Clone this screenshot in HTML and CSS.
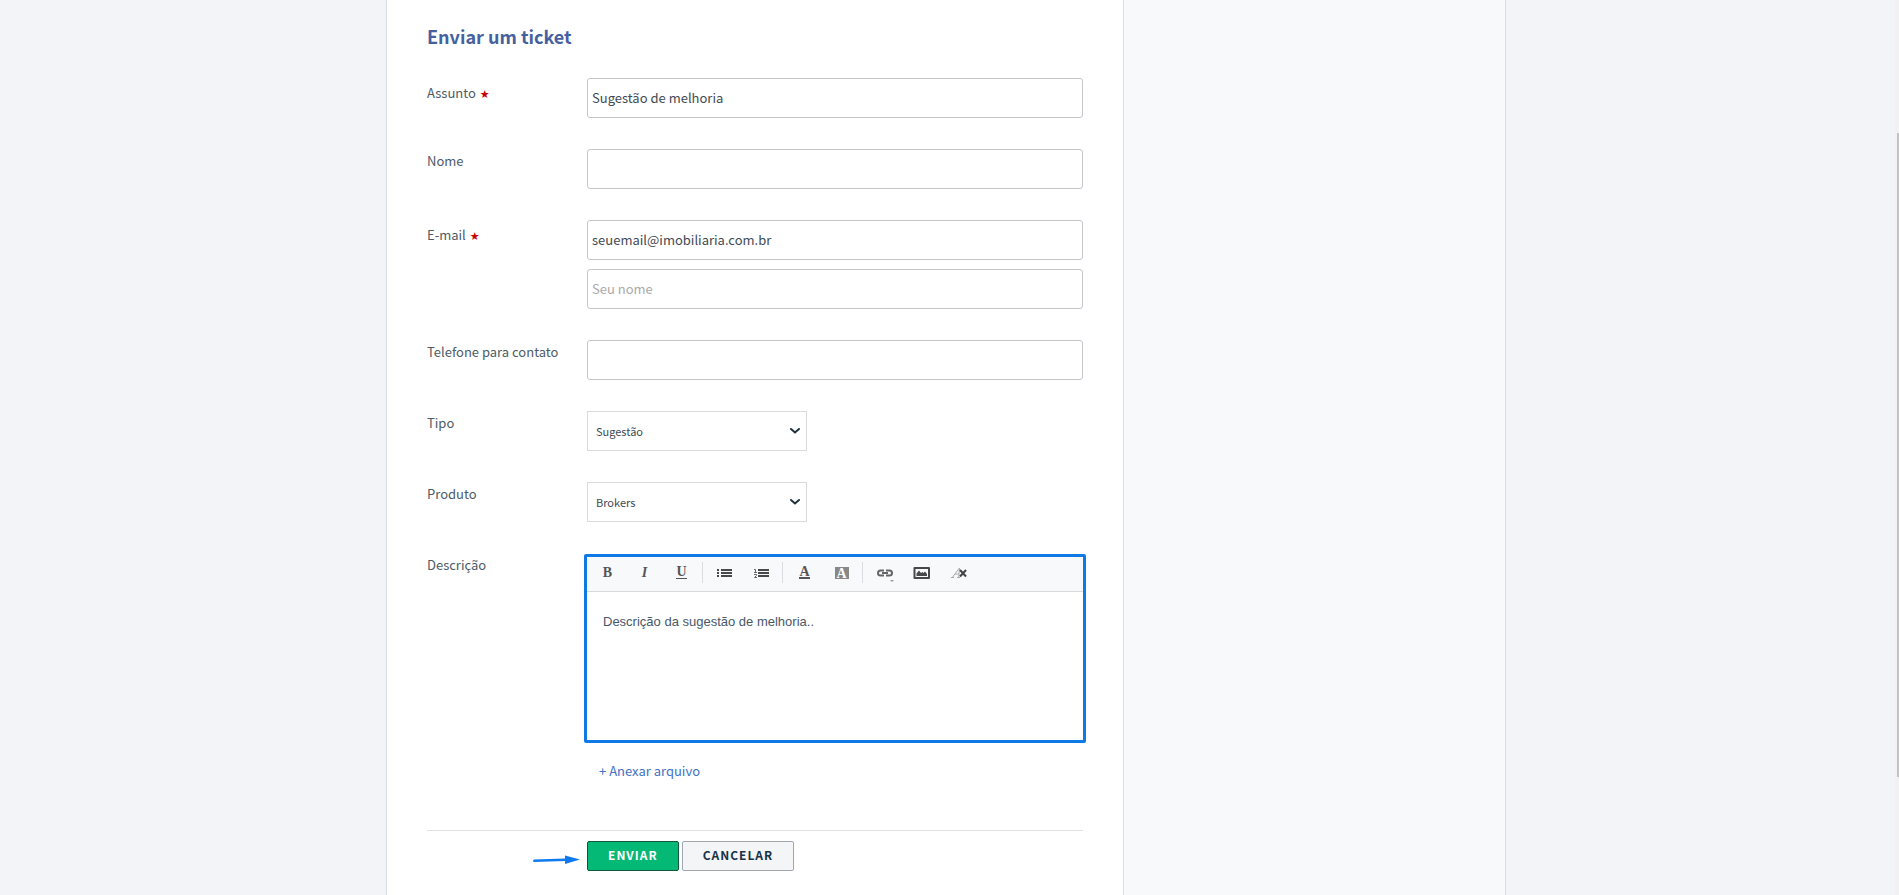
FILE: index.html
```html
<!DOCTYPE html>
<html lang="pt-BR">
<head>
<meta charset="utf-8">
<title>Enviar um ticket</title>
<link rel="stylesheet" href="styles.css">
</head>
<body>
<div class="page">
  <main class="content">
    <h1 class="title">Enviar um ticket</h1>
    <form class="ticket">
      <div class="row">
        <label class="label required" for="subject">Assunto <span class="star">★</span></label>
        <div class="field"><input class="input" id="subject" type="text" value="Sugestão de melhoria"></div>
      </div>
      <div class="row">
        <label class="label" for="name">Nome</label>
        <div class="field"><input class="input" id="name" type="text"></div>
      </div>
      <div class="row">
        <label class="label required" for="email">E-mail <span class="star">★</span></label>
        <div class="field">
          <input class="input" id="email" type="text" value="seuemail@imobiliaria.com.br">
          <input class="input" type="text" placeholder="Seu nome" aria-label="Seu nome">
        </div>
      </div>
      <div class="row">
        <label class="label" for="phone">Telefone para contato</label>
        <div class="field"><input class="input" id="phone" type="text"></div>
      </div>
      <div class="row">
        <label class="label" for="type">Tipo</label>
        <div class="field">
          <div class="select-wrap">
            <select class="select" id="type"><option>Sugestão</option></select>
            <svg class="chevron" viewBox="0 0 12 8"><path d="M2 2l4 3.4L10 2"/></svg>
          </div>
        </div>
      </div>
      <div class="row">
        <label class="label" for="product">Produto</label>
        <div class="field">
          <div class="select-wrap">
            <select class="select" id="product"><option>Brokers</option></select>
            <svg class="chevron" viewBox="0 0 12 8"><path d="M2 2l4 3.4L10 2"/></svg>
          </div>
        </div>
      </div>
      <div class="row">
        <label class="label" for="description">Descrição</label>
        <div class="field">
          <div class="editor">
            <div class="toolbar">
              <button class="tool" type="button" aria-label="Negrito"><b class="glyph">B</b></button>
              <button class="tool" type="button" aria-label="Itálico"><i class="glyph">I</i></button>
              <button class="tool" type="button" aria-label="Sublinhado"><span class="glyph underlined">U</span></button>
              <span class="sep"></span>
              <button class="tool" type="button" aria-label="Lista">
                <svg width="15" height="12" viewBox="0 0 15 12"><path d="M0 2h2v2H0zM4 2h11v2H4zM0 5h2v2H0zM4 5h11v2H4zM0 8h2v2H0zM4 8h11v2H4z"/></svg>
              </button>
              <button class="tool" type="button" aria-label="Lista numerada">
                <svg width="15" height="12" viewBox="0 0 15 12"><path d="M4 2h11v2H4zM4 5h11v2H4zM4 8h11v2H4z"/><path class="thin" d="M0 2.500h1.500v3M0 5.500h3M0 7.500h2.500v1L.5 10.500H3"/></svg>
              </button>
              <span class="sep"></span>
              <button class="tool" type="button" aria-label="Cor do texto"><span class="glyph colored">A</span></button>
              <button class="tool" type="button" aria-label="Cor de fundo"><span class="glyph filled">A</span></button>
              <span class="sep"></span>
              <button class="tool" type="button" aria-label="Link">
                <svg width="18" height="20" viewBox="0 0 18 20"><path class="stroke" d="M8 12.500H4.500a2.500 2.500 0 0 1 0-5H8M10 7.500h3.500a2.500 2.500 0 0 1 0 5H10M6 10h6"/><path class="faint" d="M14 17h4l-2 2z"/></svg>
              </button>
              <button class="tool" type="button" aria-label="Imagem">
                <svg width="18" height="12" viewBox="0 0 18 12"><path fill-rule="evenodd" d="M1.500 0h14.500q1 0 1 1v10q0 1-1 1H1.500q-1 0-1-1V1q0-1 1-1zM2.500 2v8H15V2zM3.500 9V6.500L6 3.500l2 2.500 1.500-1 1 1 1.500-1.500 2 2.500v2z"/></svg>
              </button>
              <button class="tool" type="button" aria-label="Limpar formatação">
                <svg width="16" height="12" viewBox="0 0 16 12"><path class="light" d="M0 10.500h3M1.200 10.500L8.500 1l-.8 9.500M6 10.500h3M4 7h4"/><path class="cross" d="M9 3l6 6.500M15 3L9 9.500"/></svg>
              </button>
            </div>
            <textarea class="textarea" id="description">Descrição da sugestão de melhoria..</textarea>
          </div>
          <a class="attach" href="#">+ Anexar arquivo</a>
        </div>
      </div>
      <div class="actions">
        <svg class="arrow" viewBox="0 0 48 12"><path d="M2 5.500L33 4.500V1.500l15 4L33 10V7L2 8Q0 7 2 5.500z"/></svg>
        <button class="btn primary" type="submit">ENVIAR</button>
        <button class="btn" type="button">CANCELAR</button>
      </div>
    </form>
  </main>
  <aside class="sidebar"></aside>
</div>
<div class="track"><div class="thumb"></div></div>
</body>
</html>
```
FILE: styles.css
```css
* { box-sizing: border-box; }

body {
  margin: 0;
  padding-right: 7px;
  background: #f2f4f8;
  color: #4d5b67;
  font: 13px/20px "Noto Sans CJK SC", "Open Sans", sans-serif;
}

.page {
  display: flex;
  max-width: 1120px;
  min-height: 100vh;
  margin: 0 auto;
  border: solid #d9dce2;
  border-width: 0 1px;
  background: #f8f9fb;
}

.content {
  flex: 1;
  padding: 24px 40px;
  background: #fff;
  border-right: 1px solid #dcdfe1;
}

.sidebar {
  width: 381px;
  flex: none;
}

.title {
  margin: 0 0 30px;
  color: #44609f;
  font-size: 18px;
  line-height: 24px;
  font-weight: 700;
}

.ticket {
  display: flex;
  flex-direction: column;
  gap: 31px;
}

.row { display: flex; }

.label {
  width: 160px;
  padding-top: 2px;
  flex: none;
}

.required { padding-top: 5px; }

.star {
  margin-left: 1px;
  color: #c00;
  font: 11px/12px "DejaVu Sans", sans-serif;
}

.field {
  flex: 1;
  min-width: 0;
  display: flex;
  flex-direction: column;
  gap: 9px;
}

.input {
  width: 100%;
  height: 40px;
  padding: 0 4px 1px;
  border: 1px solid #c3c6ca;
  border-radius: 3px;
  background: #fff;
  color: #3f4a53;
  font: inherit;
}

.input::placeholder { color: #aaa; opacity: 1; }

.select-wrap {
  position: relative;
  width: 220px;
}

.select {
  display: block;
  width: 100%;
  height: 40px;
  padding: 0 8px;
  appearance: none;
  border: 1px solid #d8dadc;
  border-radius: 0;
  background: #fff;
  color: #3f4a53;
  font: inherit;
  font-size: 11px;
}

.chevron {
  position: absolute;
  right: 6px;
  top: 16px;
  width: 12px;
  height: 8px;
  fill: none;
  stroke: #1c2f3e;
  stroke-width: 2;
  stroke-linecap: round;
}

.editor {
  margin: 1px -3px 0;
  border: 3px solid #0f79e6;
  border-radius: 2px;
}

.toolbar {
  display: flex;
  align-items: center;
  height: 35px;
  padding: 0 2px 3px;
  border-bottom: 1px solid #d5dade;
  background: #f8f9fb;
}

.tool {
  display: flex;
  align-items: center;
  justify-content: center;
  width: 37px;
  height: 24px;
  padding: 0;
  border: 0;
  background: none;
  color: #555;
  fill: #484848;
}

.sep {
  width: 1px;
  height: 21px;
  margin: 0 3px 0 2px;
  background: #d9dde1;
}

.glyph { font: bold 14px/14px "Liberation Serif", serif; }
i.glyph { font-style: italic; }
.underlined { border-bottom: 1px solid #555; line-height: 12px; }
.colored { border-bottom: 2px solid #555; line-height: 11px; }
.filled { width: 14px; height: 12px; line-height: 13px; background: #888; color: #fff; }
.thin { fill: none; stroke: #666; stroke-width: 1; }
.stroke { fill: none; stroke: #666; stroke-width: 2; }
.light { fill: none; stroke: #aaa; stroke-width: 1; }
.cross { fill: none; stroke: #444; stroke-width: 2; }
.faint { fill: #999; }

.textarea {
  display: block;
  width: 100%;
  height: 148px;
  padding: 20px 16px;
  border: 0;
  resize: none;
  color: #475867;
  font: 13px/20px "Liberation Sans", Arial, sans-serif;
}

.attach {
  align-self: flex-start;
  margin: 9px 0 18px 12px;
  color: #4272c4;
  text-decoration: none;
}

.actions {
  position: relative;
  display: flex;
  gap: 3px;
  padding: 10px 0 0 160px;
  border-top: 1px solid #dfe1e3;
}

.arrow {
  position: absolute;
  left: 105px;
  top: 23px;
  width: 48px;
  height: 12px;
  fill: #0f79f0;
}

.btn {
  height: 30px;
  padding: 0 20px 2px;
  border: 1px solid #a0a7b3;
  border-radius: 2px;
  background: #f3f5f7;
  color: #183247;
  font: inherit;
  font-size: 12px;
  font-weight: 700;
  letter-spacing: 1px;
}

.primary {
  border-color: #10573c;
  background: #04b876;
  color: #fff;
}

.track {
  position: fixed;
  top: 0;
  right: 0;
  bottom: 0;
  width: 4px;
  padding-top: 133px;
  background: #f1f1f1;
}

.thumb {
  height: 72vh;
  margin-left: 2px;
  background: #c1c1c1;
}
```
